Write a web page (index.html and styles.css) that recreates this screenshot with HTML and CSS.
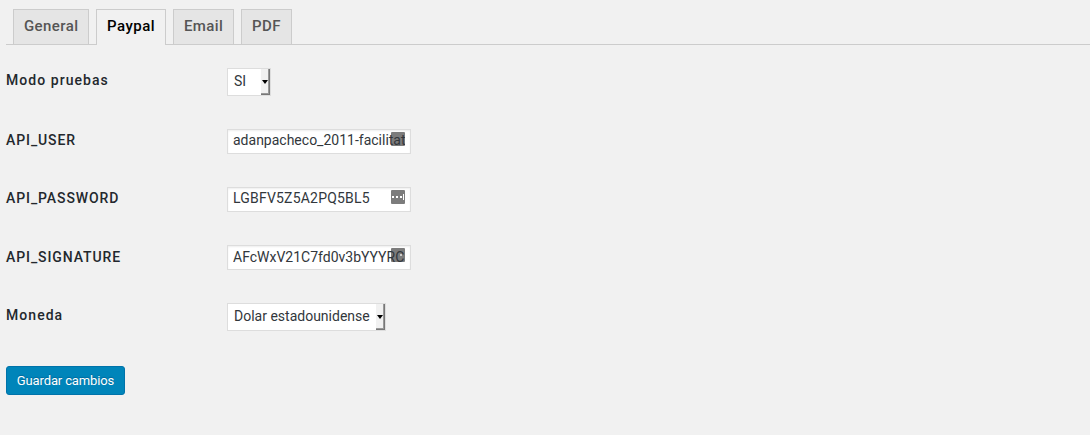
FILE: index.html
```
<!DOCTYPE html>
<html lang="es">
<head>
<meta charset="utf-8">
<title>Ajustes Paypal</title>
<link rel="stylesheet" href="styles.css">
</head>
<body>
<nav class="tabs">
  <a class="tab general">General</a>
  <a class="tab paypal active">Paypal</a>
  <a class="tab email">Email</a>
  <a class="tab pdf">PDF</a>
</nav>
<form class="form">
  <div class="row first"><label>Modo pruebas</label><div class="select short"><span>SI</span><i class="drop"></i></div></div>
  <div class="row user"><label>API_USER</label><div class="field"><i class="badge"></i><span class="value">adanpacheco_2011-facilitat</span></div></div>
  <div class="row password"><label>API_PASSWORD</label><div class="field"><i class="badge"><svg width="14" height="14"><path d="M1 6h2v2H1zM5 6h2v2H5zM9 6h2v2H9zM12 4h1v6h-1z" fill="#fff"/></svg></i><span class="value">LGBFV5Z5A2PQ5BL5</span></div></div>
  <div class="row signature"><label>API_SIGNATURE</label><div class="field"><i class="badge"><svg width="14" height="14"><path d="M9 6h2v2H9z" fill="#ccc"/></svg></i><span class="value">AFcWxV21C7fd0v3bYYYRC</span></div></div>
  <div class="row currency"><label>Moneda</label><div class="select long"><span>Dolar estadounidense</span><i class="drop"></i></div></div>
  <button class="submit" type="button">Guardar cambios</button>
</form>
</body>
</html>
```
FILE: styles.css
```
* { box-sizing: border-box; }
body { margin: 0; background: #f1f1f1; font-family: Roboto, sans-serif; color: #23282d; overflow: hidden; }
.tabs { display: flex; gap: 7px; margin-left: 6px; padding: 9px 0 0 7px; height: 45px; border-bottom: 1px solid #ccc; }
.tab { height: 35px; border: 1px solid #ccc; border-bottom: 0; background: #e5e5e5; color: #555; font-size: 15px; font-weight: 500; letter-spacing: .4px; line-height: 32px; padding-left: 10px; white-space: nowrap; }
.general { width: 76px; }
.paypal { width: 70px; letter-spacing: .5px; }
.email { width: 61px; }
.pdf { width: 51px; }
.tab.active { height: 36px; background: #f1f1f1; color: #000; }
.form { padding-left: 6px; }
.row { display: flex; }
.row label { width: 221px; font-size: 14px; font-weight: 500; letter-spacing: .9px; line-height: 22px; }
.first label, .currency label, .signature label { padding-top: 1px; }
.first label { letter-spacing: 1.05px; }
.currency label { letter-spacing: 1.05px; }
.first { padding-top: 23px; height: 84px; }
.first, .currency { align-items: flex-start; }
.user, .password, .signature { height: 58px; align-items: flex-start; }
.currency { height: 63px; }
.field, .select { position: relative; background: #fff; border: 1px solid #ddd; font-size: 14px; color: #32373c; white-space: nowrap; }
.field { width: 184px; height: 25px; padding: 0 5px; line-height: 21px; box-shadow: inset 0 1px 2px rgba(0,0,0,.07); }
.value { display: block; position: relative; overflow: hidden; }
.password .value { letter-spacing: .2px; }
.signature .value { line-height: 23px; }
.badge { position: absolute; right: 5px; top: 2px; width: 14px; height: 14px; border-radius: 1px; background: #7c7c7c; }
.badge svg { display: block; }
.select { height: 28px; padding-left: 6px; line-height: 25px; }
.short { width: 44px; }
.long { width: 159px; }
.drop { position: absolute; right: 0; top: 0; width: 9px; height: 26px; background: #f1f1f1; border-right: 1px solid #777; border-bottom: 1px solid #777; box-shadow: inset -1px -1px #999; }
.drop::after { content: ""; position: absolute; left: 1px; top: 11px; border: 3px solid transparent; border-top: 4px solid #000; border-bottom: 0; }
.submit { display: block; width: 119px; height: 29px; border: 1px solid #0073aa; border-radius: 3px; background: #0085ba; color: #fff; font: 13px/26px Roboto, sans-serif; letter-spacing: -.13px; padding: 0; text-shadow: 0 -1px 1px #006799; }
```
